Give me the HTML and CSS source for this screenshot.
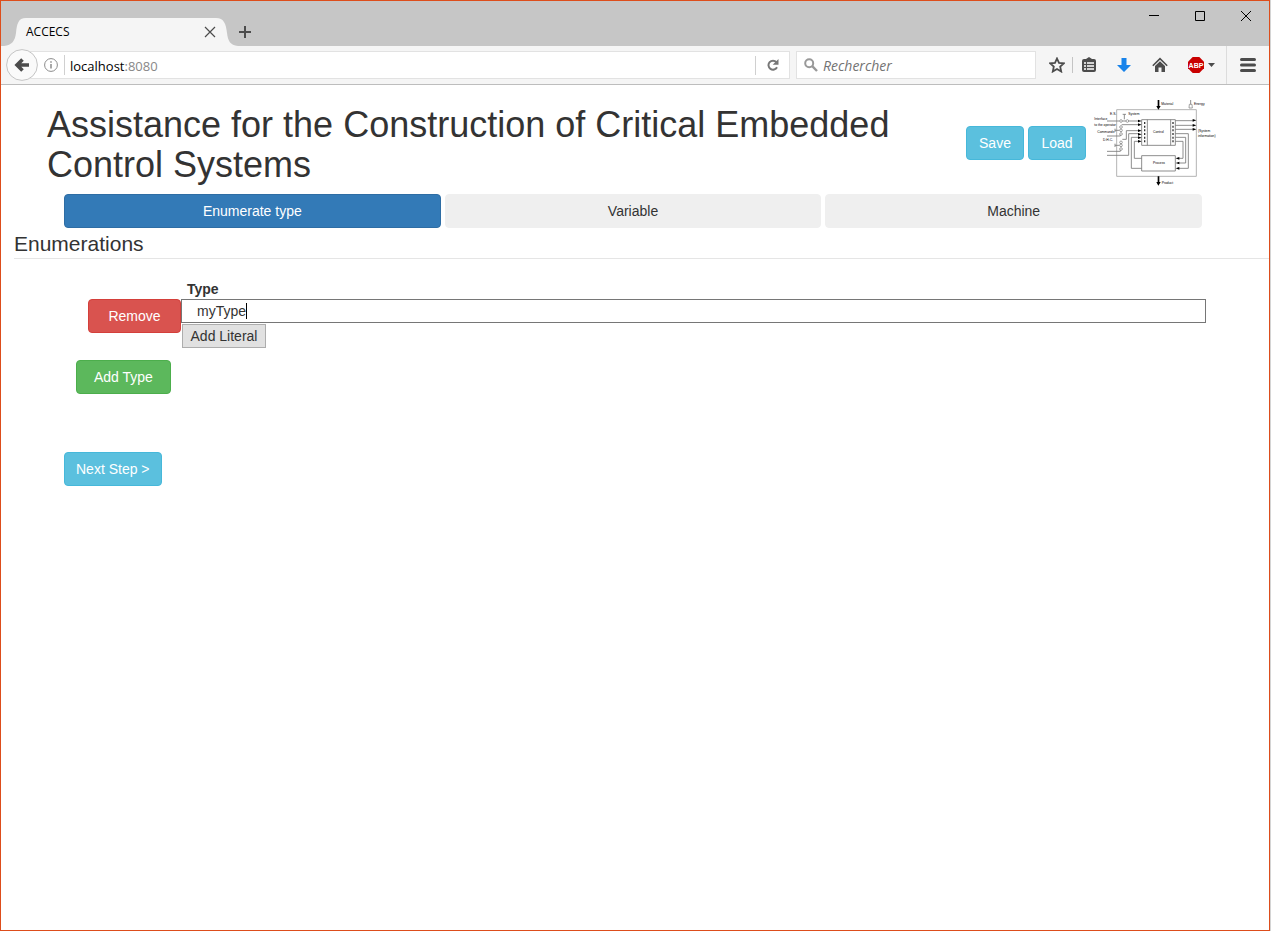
FILE: index.html
```html
<!DOCTYPE html>
<html lang="en">
<head>
<meta charset="utf-8">
<title>ACCECS</title>
<link rel="stylesheet" href="styles.css">
</head>
<body>
<div class="window">
  <header class="titlebar">
    <div class="tab">
      <svg class="tab-edge" width="25" height="28" viewBox="0 0 25 28"><path d="M3 28C11 27 14 23 15 15C16 6 17 0 25 0V28Z" fill="#f5f5f5"/></svg>
      <div class="tab-body">
        <span class="tab-title">ACCECS</span>
        <button class="icon-button" aria-label="Close tab"><svg width="12" height="12" viewBox="0 0 12 12"><path d="M1 1L11 11M11 1L1 11" stroke="#4c4c4c" stroke-width="1.2" fill="none"/></svg></button>
      </div>
      <svg class="tab-edge" width="25" height="28" viewBox="0 0 25 28"><path d="M22 28C14 27 12 23 11 15C10 6 8 0 0 0V28Z" fill="#f5f5f5"/></svg>
    </div>
    <button class="icon-button new-tab" aria-label="New tab"><svg width="12" height="12" viewBox="0 0 12 12"><path d="M6 0V12M0 6H12" stroke="#4c4c4c" stroke-width="2" fill="none"/></svg></button>
    <div class="window-controls">
      <button class="icon-button" aria-label="Minimize"><svg width="12" height="12" viewBox="0 0 12 12"><path d="M1 5.500H11" stroke="#000" fill="none"/></svg></button>
      <button class="icon-button" aria-label="Maximize"><svg width="12" height="12" viewBox="0 0 12 12"><path d="M1.500 1.500H10.500V10.500H1.500Z" stroke="#000" fill="none"/></svg></button>
      <button class="icon-button" aria-label="Close"><svg width="12" height="12" viewBox="0 0 12 12"><path d="M1 1L11 11M11 1L1 11" stroke="#000" fill="none"/></svg></button>
    </div>
  </header>

  <div class="navbar">
    <button class="icon-button back" aria-label="Back"><svg width="32" height="32" viewBox="0 0 32 32"><circle cx="16" cy="16" r="15.400" fill="#fafafa" stroke="#c4c4c4"/><path d="M16.500 10.500L11 16L16.500 21.500M11.500 16H23" fill="none" stroke="#4c4c4c" stroke-width="3.600"/></svg></button>
    <div class="url-field">
      <button class="icon-button info" aria-label="Site information"><svg width="14" height="14" viewBox="0 0 14 14"><circle cx="7" cy="7" r="6.400" fill="none" stroke="#8c8c8c"/><path d="M7 6V10.500M7 3.200V4.800" stroke="#8c8c8c" stroke-width="1.500"/></svg></button>
      <div class="url-text" role="textbox" aria-label="Address">localhost<span class="port">:8080</span></div>
      <button class="icon-button reload" aria-label="Reload"><svg width="12" height="12" viewBox="0 0 12 12"><path d="M9.400 3.200A4.500 4.500 0 1 0 10 8.200" fill="none" stroke="#777" stroke-width="2"/><path d="M11.500 0V5.800H5.700Z" fill="#777"/></svg></button>
    </div>
    <label class="search-field">
      <svg width="14" height="14" viewBox="0 0 14 14"><circle cx="5.200" cy="5.200" r="4" fill="none" stroke="#999" stroke-width="2"/><path d="M8.200 8.200L13 13" stroke="#999" stroke-width="2.400"/></svg>
      <input type="search" placeholder="Rechercher" aria-label="Rechercher">
    </label>
    <div class="tools">
      <button class="icon-button tool" aria-label="Bookmark"><svg width="16" height="16" viewBox="0 0 16 16"><path d="M8 1.500L10 5.900L14.800 6.400L11.200 9.600L12.200 14.500L8 12L3.800 14.500L4.800 9.600L1.200 6.400L6 5.900Z" fill="none" stroke="#4c4c4c" stroke-width="1.800"/></svg></button>
      <button class="icon-button tool split" aria-label="Bookmarks list"><svg width="16" height="16" viewBox="0 0 16 16"><path d="M3 2H5L8 0L11 2H13A2 2 0 0 1 15 4V13A2 2 0 0 1 13 15H3A2 2 0 0 1 1 13V4A2 2 0 0 1 3 2Z" fill="#4c4c4c"/><path d="M3 6H5M3 9H5M3 12H5M6 6H13M6 9H13M6 12H13" stroke="#fff" stroke-width="1.500"/></svg></button>
      <button class="icon-button tool" aria-label="Downloads"><svg width="16" height="16" viewBox="0 0 16 16"><path d="M5.500 1H10.500V8H15L8 15L1 8H5.500Z" fill="#1883ea"/></svg></button>
      <button class="icon-button tool" aria-label="Home"><svg width="16" height="16" viewBox="0 0 16 16"><path d="M0.800 8.800L8 1.700L15.200 8.800" fill="none" stroke="#4c4c4c" stroke-width="1.600"/><path d="M3 9L8 4.200L13 9V15H9.500V10.500H6.500V15H3Z" fill="#4c4c4c"/></svg></button>
      <button class="icon-button adblock" aria-label="Adblock Plus"><svg width="28" height="16" viewBox="0 0 28 16"><path d="M4.700 0H11.300L16 4.700V11.300L11.300 16H4.700L0 11.300V4.700Z" fill="#c90000"/><text x="8" y="10.500" text-anchor="middle" class="badge-text">ABP</text><path d="M20 6H27L23.500 10Z" fill="#4c4c4c"/></svg></button>
      <button class="icon-button menu" aria-label="Menu"><svg width="16" height="16" viewBox="0 0 16 16"><path d="M1.500 2.500H14.500M1.500 8H14.500M1.500 13.500H14.500" stroke="#4c4c4c" stroke-width="3" stroke-linecap="round"/></svg></button>
    </div>
  </div>

  <main class="page">
    <div class="page-header">
      <h1>Assistance for the Construction of Critical Embedded Control Systems</h1>
      <div class="actions">
        <button class="btn btn-info">Save</button>
        <button class="btn btn-info">Load</button>
      </div>
      <svg class="diagram" width="124" height="90" viewBox="24 21 372 270" role="img" aria-label="Control system diagram">
        <g fill="none" stroke="#a5a5a5" stroke-width="2.500">
          <path d="M95 59H334V259H95Z"/>
        </g>
        <g fill="none" stroke="#777" stroke-width="2.500">
          <path d="M170 89H271V166H170ZM187 89V166M257 89V166M170 197H271V243H170Z"/>
          <path d="M66 93H104M112 93H123M131 93H162M113 73H123M118 73V88M110 104H162M90 121H104M90 116V126M66 138H106V134M112 148H124V122H162M90 166H104M90 161V171M66 184H106V180M66 196H131V131H162M162 142H139V235H170M162 154H148V205H170"/>
          <path d="M271 92H326M271 106H326M271 118H326M271 131H310V235H280M271 142H302V219H280M271 154H294V205H280M317 30V44"/>
        </g>
        <g fill="#fff" stroke="#777" stroke-width="2">
          <circle cx="108" cy="93" r="4"/><circle cx="127" cy="93" r="4"/><circle cx="108" cy="111" r="4"/><circle cx="108" cy="121" r="4"/><circle cx="108" cy="132" r="4"/><circle cx="108" cy="157" r="4"/><circle cx="108" cy="166" r="4"/><circle cx="108" cy="177" r="4"/><path d="M313 43H321L322 54H312Z"/>
        </g>
        <path d="M218 30H223V48H227L220 59L214 48H218ZM218 259H223V276H227L220 287L214 276H218Z"/>
        <path d="M159 89L170 93L159 97ZM159 100L170 104L159 108ZM159 118L170 122L159 126ZM159 129L170 133L159 137ZM159 139L170 143L159 147ZM159 150L170 154L159 158ZM323 87L334 91L323 95ZM323 102L334 106L323 110ZM323 114L334 118L323 122ZM283 201L272 205L283 209ZM283 215L272 219L283 223ZM283 231L272 235L283 239Z"/>
        <path d="M179 96V160M264 96V160" stroke="#333" stroke-width="4" stroke-dasharray="6 5"/>
        <g class="diagram-text">
          <text x="229" y="44">Material</text><text x="327" y="45">Energy</text><text x="75" y="76">E.S.</text><text x="130" y="75">System</text>
          <text x="28" y="91">Interface</text><text x="28" y="107">to the operator</text><text x="37" y="128">Commands</text><text x="54" y="154">D.H.C.</text>
          <text x="204" y="129">Control</text><text x="204" y="223">Process</text><text x="339" y="126">(System</text><text x="339" y="141">information)</text><text x="230" y="282">Product</text>
        </g>
      </svg>
    </div>

    <nav class="steps">
      <button class="btn btn-primary">Enumerate type</button>
      <button class="btn btn-default">Variable</button>
      <button class="btn btn-default">Machine</button>
    </nav>

    <section>
      <h2>Enumerations</h2>
      <div class="type-row">
        <button class="btn btn-danger">Remove</button>
        <div class="type-fields">
          <label for="type-name">Type</label>
          <div class="name-wrap"><input id="type-name" type="text" value="myType"><span class="caret"></span></div>
          <button class="literal">Add Literal</button>
        </div>
      </div>
      <div class="add-row"><button class="btn btn-success">Add Type</button></div>
      <div class="next-row"><button class="btn btn-info">Next Step &gt;</button></div>
    </section>
  </main>
</div>
</body>
</html>
```
FILE: styles.css
```css
* { box-sizing: border-box; }

body {
  margin: 0;
  padding-right: 1px;
  background: #d4d4d4;
  font: 14px/20px "Liberation Sans", Arial, sans-serif;
  color: #333;
}

button, input { font: inherit; color: inherit; }

.window {
  display: flex;
  flex-direction: column;
  min-height: 100vh;
  border: 1px solid #dd4d1b;
  background: #fff;
}

.icon-button {
  display: flex;
  align-items: center;
  justify-content: center;
  padding: 0;
  border: 0;
  background: none;
}

svg { display: block; flex: none; }

.titlebar {
  display: flex;
  align-items: flex-end;
  height: 45px;
  background: #c6c6c6;
  font: 12px/16px "Open Sans", "Noto Sans", sans-serif;
  color: #000;
}

.tab { display: flex; }

.tab-body {
  display: flex;
  align-items: center;
  justify-content: space-between;
  width: 190px;
  height: 28px;
  background: #f5f5f5;
}

.new-tab { height: 28px; margin-left: -2px; }

.window-controls {
  display: flex;
  align-self: flex-start;
  margin-left: auto;
}

.window-controls .icon-button { width: 46px; height: 30px; }

.navbar {
  display: flex;
  align-items: center;
  height: 39px;
  padding-left: 5px;
  border-bottom: 1px solid #bdbdbd;
  background: #f5f5f5;
  font: 13px/18px "Open Sans", "Noto Sans", sans-serif;
}

.back { z-index: 1; }

.url-field, .search-field {
  display: flex;
  align-items: center;
  height: 28px;
  border: 1px solid #e2e2e2;
  background: #fff;
}

.url-field { flex: 1; margin-left: -8px; padding-left: 13px; }

.info { padding-right: 6px; }

.url-text {
  flex: 1;
  padding: 2px 0 0 5px;
  border-left: 1px solid #d0d0d0;
  color: #000;
}

.port { color: #888; }

.reload {
  width: 34px;
  height: 19px;
  border-left: 1px solid #d0d0d0;
}

.search-field {
  width: 240px;
  margin-left: 6px;
  padding-left: 7px;
  gap: 5px;
}

.search-field input {
  flex: 1;
  min-width: 0;
  padding: 2px 0 0;
  border: 0;
  outline: 0;
  background: none;
  font-size: 14px;
  font-style: italic;
}

.search-field input::placeholder { color: #737373; }

.tools { display: flex; align-items: center; height: 38px; padding-left: 5px; }

.tool { width: 36px; height: 16px; }

.tools .tool:first-child { width: 31px; }

.tools .split { width: 32px; margin-right: 2px; border-left: 1px solid #c4c4c4; }

.adblock { width: 38px; margin-left: 10px; justify-content: flex-start; }

.menu { width: 43px; height: 38px; border-left: 1px solid #dcdcdc; }

.badge-text { font: bold 7px "Liberation Sans", Arial, sans-serif; fill: #fff; }

.page { flex: 1; padding-top: 12px; }

.page-header {
  display: flex;
  align-items: center;
  padding: 8px 52px 9px 46px;
}

h1 {
  flex: 1;
  margin: 0;
  font-size: 36px;
  font-weight: 400;
  line-height: 40px;
}

.actions { display: flex; gap: 4px; padding: 0 7px 4px 0; }

.actions .btn { min-width: 58px; }

.diagram { margin: -10px 0 -4px; }

.diagram-text { font: 10px "Liberation Sans", Arial, sans-serif; fill: #000; }

.btn {
  height: 34px;
  padding: 0 12px;
  border: 1px solid transparent;
  border-radius: 4px;
  color: #fff;
  text-align: center;
}

.btn-info { background: #5bc0de; border-color: #46b8da; }
.btn-primary { background: #337ab7; border-color: #2e6da4; }
.btn-danger { background: #d9534f; border-color: #d43f3a; }
.btn-success { background: #5cb85c; border-color: #4cae4c; }
.btn-default { background: #efefef; border-color: #efefef; color: #333; }

.steps { display: flex; gap: 4px; padding: 0 67px 0 63px; }

.steps .btn { flex: 1; }

h2 {
  margin: 0 0 20px 13px;
  padding-top: 2px;
  border-bottom: 1px solid #e5e5e5;
  font-size: 21px;
  font-weight: 400;
  line-height: 28px;
}

.type-row {
  display: flex;
  align-items: flex-start;
  padding: 0 63px 0 87px;
}

.type-row .btn { min-width: 93px; margin-top: 20px; }

.type-fields { flex: 1; }

.type-fields label { display: block; padding-left: 6px; font-weight: 700; }

.name-wrap { position: relative; }

.name-wrap input {
  display: block;
  width: 100%;
  height: 24px;
  padding: 0 15px;
  border: 1px solid #767676;
  background: #fff;
}

.caret {
  position: absolute;
  top: 4px;
  left: 65px;
  width: 1px;
  height: 16px;
  background: #000;
}

.literal {
  display: block;
  min-width: 84px;
  height: 24px;
  margin: 1px 0 0 1px;
  padding: 0 7px;
  border: 1px solid #adadad;
  background: #e1e1e1;
}

.add-row { padding: 12px 75px 0; }

.add-row .btn { padding: 0 17px; }

.next-row { padding: 58px 63px 0; }

.next-row .btn { padding: 0 11px; }
```
